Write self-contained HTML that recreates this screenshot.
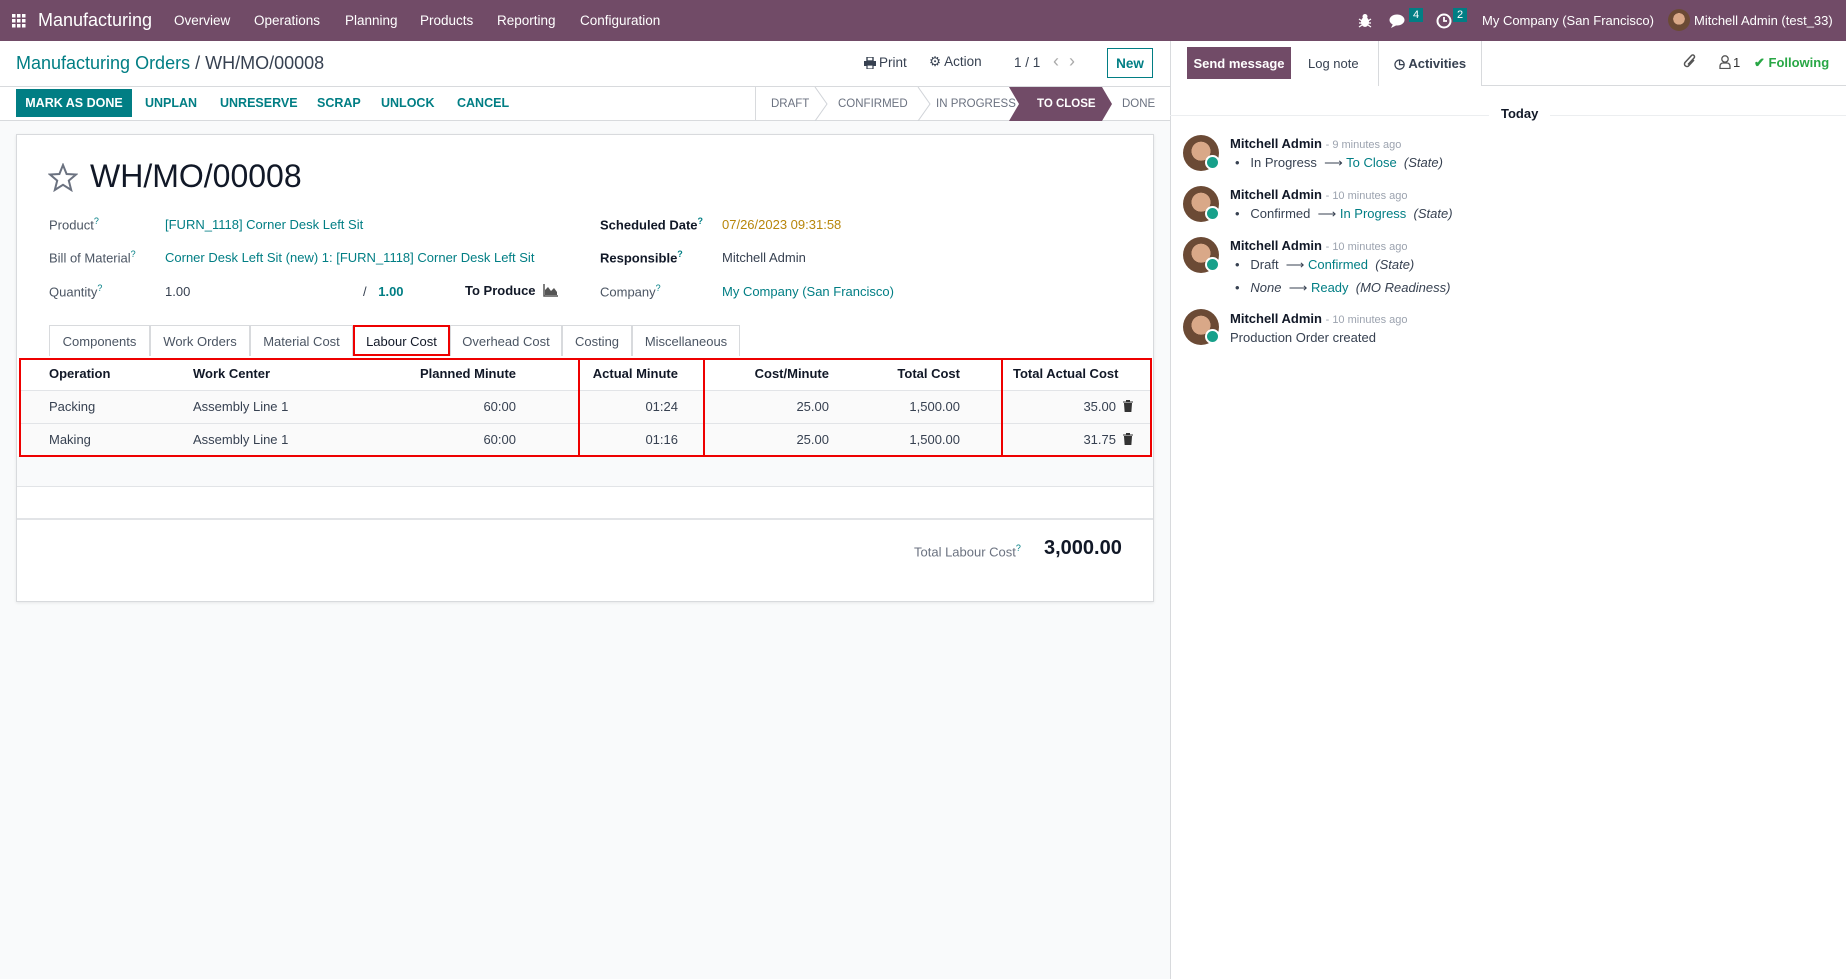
<!DOCTYPE html>
<html><head><meta charset="utf-8"><style>
*{box-sizing:border-box;margin:0;padding:0}
body{width:1846px;height:979px;overflow:hidden;font-family:"Liberation Sans",sans-serif;font-size:13px;color:#374151;background:#f9fafb;position:relative}
.a{position:absolute;white-space:nowrap}
.nav{position:absolute;left:0;top:0;width:1846px;height:41px;background:#714b67;color:#fff}
.nav .a{top:13px;font-size:13.5px}
.teal{color:#017e84}
.b{font-weight:bold}
.lbl{color:#4b5563}
sup{font-size:9px;color:#017e84}
.tab{position:absolute;top:325px;height:31px;border:1px solid #d8dadd;border-bottom:none;background:#fff;color:#4b5563;padding-top:8px;text-align:center;font-size:13px}
.r{text-align:right}
.red{position:absolute;border:2px solid #e00;}
.st{position:absolute;top:98px;font-size:11.5px;color:#6b7280}
</style></head><body>
<div class="nav">
 <svg class="a" style="left:12px;top:14px" width="14" height="14"><g fill="#fff"><rect x="0" y="0" width="3.5" height="3.5"/><rect x="5" y="0" width="3.5" height="3.5"/><rect x="10" y="0" width="3.5" height="3.5"/><rect x="0" y="5" width="3.5" height="3.5"/><rect x="5" y="5" width="3.5" height="3.5"/><rect x="10" y="5" width="3.5" height="3.5"/><rect x="0" y="10" width="3.5" height="3.5"/><rect x="5" y="10" width="3.5" height="3.5"/><rect x="10" y="10" width="3.5" height="3.5"/></g></svg>
 <div class="a" style="left:38px;top:10px;font-size:18px">Manufacturing</div>
 <div class="a" style="left:174px">Overview</div>
 <div class="a" style="left:254px">Operations</div>
 <div class="a" style="left:345px">Planning</div>
 <div class="a" style="left:420px">Products</div>
 <div class="a" style="left:497px">Reporting</div>
 <div class="a" style="left:580px">Configuration</div>
 <svg class="a" style="left:1358px;top:13px" width="14" height="15"><ellipse cx="7" cy="9" rx="4" ry="5" fill="#fff"/><circle cx="7" cy="3.5" r="2.5" fill="#fff"/><path d="M1 6l3 2M13 6l-3 2M1 10h3M13 10h-3M1 14l3-2M13 14l-3-2" stroke="#fff" stroke-width="1.3"/></svg>
 <svg class="a" style="left:1389px;top:13px" width="18" height="16"><ellipse cx="8" cy="7" rx="7.5" ry="5.5" fill="#fff"/><path d="M4 11 L2 15 L8 12Z" fill="#fff"/></svg>
 <div class="a" style="left:1409px;top:8px;background:#017e84;font-size:11px;padding:1px 4px">4</div>
 <svg class="a" style="left:1436px;top:13px" width="16" height="16"><circle cx="8" cy="8" r="6.5" fill="none" stroke="#fff" stroke-width="2"/><path d="M8 4v4h3" stroke="#fff" stroke-width="1.8" fill="none"/></svg>
 <div class="a" style="left:1453px;top:8px;background:#017e84;font-size:11px;padding:1px 4px">2</div>
 <div class="a" style="left:1482px;font-size:13px">My Company (San Francisco)</div>
 <div class="a" style="left:1668px;top:9px;width:22px;height:22px;border-radius:50%;background:radial-gradient(circle at 50% 45%,#d9a888 0 35%,#6b4a35 36%)"></div>
 <div class="a" style="left:1694px;font-size:13px">Mitchell Admin (test_33)</div>
</div>
<!-- control panel -->
<div class="a" style="left:0;top:41px;width:1170px;height:80px;background:#fff;border-bottom:1px solid #d8dadd"></div>
<div class="a" style="left:0;top:86px;width:1170px;height:1px;background:#d8dadd"></div>
<div class="a" style="left:16px;top:53px;font-size:18px"><span class="teal">Manufacturing Orders</span> <span style="color:#374151">/ WH/MO/00008</span></div>
<svg class="a" style="left:864px;top:57px" width="12" height="12"><rect x="3" y="0" width="6" height="4" fill="none" stroke="#374151" stroke-width="1.4"/><rect x="0" y="4" width="12" height="5" fill="#374151"/><rect x="3" y="8" width="6" height="4" fill="#fff" stroke="#374151" stroke-width="1.2"/></svg>
<div class="a" style="left:879px;top:55px;font-size:13.5px">Print</div>
<div class="a" style="left:929px;top:54px;font-size:13.5px">⚙ Action</div>
<div class="a" style="left:1014px;top:55px;font-size:13.5px">1 / 1</div>
<div class="a" style="left:1053px;top:51px;font-size:18px;color:#aaa">‹ &nbsp;›</div>
<div class="a" style="left:1107px;top:48px;width:46px;height:30px;border:1px solid #017e84;color:#017e84;font-weight:bold;text-align:center;padding-top:7px;font-size:13.5px">New</div>
<div class="a" style="left:16px;top:89px;width:116px;height:28px;background:#017e84;color:#fff;font-weight:bold;font-size:12.5px;text-align:center;padding-top:7px">MARK AS DONE</div>
<div class="a teal b" style="left:145px;top:96px;font-size:12.5px">UNPLAN</div>
<div class="a teal b" style="left:220px;top:96px;font-size:12.5px">UNRESERVE</div>
<div class="a teal b" style="left:317px;top:96px;font-size:12.5px">SCRAP</div>
<div class="a teal b" style="left:381px;top:96px;font-size:12.5px">UNLOCK</div>
<div class="a teal b" style="left:457px;top:96px;font-size:12.5px">CANCEL</div>
<div class="a" style="left:755px;top:87px;width:1px;height:34px;background:#d8dadd"></div>
<svg class="a" style="left:755px;top:87px" width="400" height="34"><g fill="none" stroke="#d0d3d8"><path d="M60 0 L72 17 L60 34"/><path d="M163 0 L175 17 L163 34"/></g><path d="M254 0 L347 0 L357 17 L347 34 L254 34 L264 17Z" fill="#714b67"/></svg>
<div class="st" style="left:771px">DRAFT</div>
<div class="st" style="left:838px">CONFIRMED</div>
<div class="st" style="left:936px">IN PROGRESS</div>
<div class="st" style="left:1037px;color:#fff;font-weight:bold">TO CLOSE</div>
<div class="st" style="left:1122px">DONE</div>
<!-- sheet -->
<div class="a" style="left:16px;top:134px;width:1138px;height:468px;background:#fff;border:1px solid #d8dadd;box-shadow:0 1px 3px rgba(0,0,0,.08)"></div>
<svg class="a" style="left:48px;top:163px" width="30" height="29"><path d="M15 2 L18.6 11 L28 11.5 L20.8 17.6 L23.2 27 L15 21.8 L6.8 27 L9.2 17.6 L2 11.5 L11.4 11Z" fill="none" stroke="#6b7280" stroke-width="2"/></svg>
<div class="a" style="left:90px;top:158px;font-size:32px;color:#111827">WH/MO/00008</div>
<div class="a lbl" style="left:49px;top:216px">Product<sup>?</sup></div>
<div class="a teal" style="left:165px;top:217px">[FURN_1118] Corner Desk Left Sit</div>
<div class="a lbl" style="left:49px;top:249px">Bill of Material<sup>?</sup></div>
<div class="a teal" style="left:165px;top:250px">Corner Desk Left Sit (new) 1: [FURN_1118] Corner Desk Left Sit</div>
<div class="a lbl" style="left:49px;top:283px">Quantity<sup>?</sup></div>
<div class="a" style="left:165px;top:284px">1.00</div>
<div class="a" style="left:363px;top:284px">/ <span class="teal b" style="margin-left:8px">1.00</span></div>
<div class="a b" style="left:465px;top:283px;color:#111827">To Produce</div>
<svg class="a" style="left:543px;top:284px" width="15" height="13"><path d="M1 0v12h14" stroke="#555" stroke-width="1.5" fill="none"/><path d="M2 11 L2 6 L5 3 L8 7 L11 4 L14 8 L14 11Z" fill="#555"/></svg>
<div class="a b" style="left:600px;top:216px;color:#111827">Scheduled Date<sup>?</sup></div>
<div class="a" style="left:722px;top:217px;color:#b8860b">07/26/2023 09:31:58</div>
<div class="a b" style="left:600px;top:249px;color:#111827">Responsible<sup>?</sup></div>
<div class="a" style="left:722px;top:250px">Mitchell Admin</div>
<div class="a lbl" style="left:600px;top:283px">Company<sup>?</sup></div>
<div class="a teal" style="left:722px;top:284px">My Company (San Francisco)</div>
<!-- tabs -->
<div class="tab" style="left:49px;width:101px">Components</div>
<div class="tab" style="left:150px;width:100px">Work Orders</div>
<div class="tab" style="left:250px;width:103px">Material Cost</div>
<div class="tab" style="left:353px;width:97px;border:2px solid #e00;color:#111827;padding-top:7px">Labour Cost</div>
<div class="tab" style="left:450px;width:112px">Overhead Cost</div>
<div class="tab" style="left:562px;width:70px">Costing</div>
<div class="tab" style="left:632px;width:108px">Miscellaneous</div>
<!-- table -->
<div class="a" style="left:19px;top:390px;width:1132px;height:66px;background:#fafafa"></div>
<div class="a" style="left:19px;top:390px;width:1132px;height:1px;background:#e2e4e7"></div>
<div class="a" style="left:19px;top:423px;width:1132px;height:1px;background:#e2e4e7"></div>
<div class="a" style="left:17px;top:456px;width:1136px;height:31px;background:#f9fafb;border-bottom:1px solid #e2e4e7"></div>
<div class="a" style="left:17px;top:518px;width:1136px;height:2px;background:#e2e4e7"></div>
<div class="red" style="left:19px;top:358px;width:1133px;height:99px"></div>
<div class="a" style="left:578px;top:358px;width:2px;height:99px;background:#e00"></div>
<div class="a" style="left:703px;top:358px;width:2px;height:99px;background:#e00"></div>
<div class="a" style="left:1001px;top:358px;width:2px;height:99px;background:#e00"></div>
<div class="a b" style="left:49px;top:366px;color:#111827">Operation</div>
<div class="a b" style="left:193px;top:366px;color:#111827">Work Center</div>
<div class="a b r" style="left:400px;width:116px;top:366px;color:#111827">Planned Minute</div>
<div class="a b r" style="left:560px;width:118px;top:366px;color:#111827">Actual Minute</div>
<div class="a b r" style="left:720px;width:109px;top:366px;color:#111827">Cost/Minute</div>
<div class="a b r" style="left:860px;width:100px;top:366px;color:#111827">Total Cost</div>
<div class="a b" style="left:1013px;top:366px;color:#111827">Total Actual Cost</div>
<div class="a" style="left:49px;top:399px">Packing</div>
<div class="a" style="left:193px;top:399px">Assembly Line 1</div>
<div class="a r" style="left:416px;width:100px;top:399px">60:00</div>
<div class="a r" style="left:578px;width:100px;top:399px">01:24</div>
<div class="a r" style="left:729px;width:100px;top:399px">25.00</div>
<div class="a r" style="left:860px;width:100px;top:399px">1,500.00</div>
<div class="a r" style="left:1016px;width:100px;top:399px">35.00</div>
<svg class="a" style="left:1123px;top:400px" width="10" height="12"><path d="M0 2h10M3.5 2V0.5h3V2M1.5 3.5h7l-0.6 8h-5.8Z" fill="#333" stroke="#333" stroke-width="1"/></svg>
<div class="a" style="left:49px;top:432px">Making</div>
<div class="a" style="left:193px;top:432px">Assembly Line 1</div>
<div class="a r" style="left:416px;width:100px;top:432px">60:00</div>
<div class="a r" style="left:578px;width:100px;top:432px">01:16</div>
<div class="a r" style="left:729px;width:100px;top:432px">25.00</div>
<div class="a r" style="left:860px;width:100px;top:432px">1,500.00</div>
<div class="a r" style="left:1016px;width:100px;top:432px">31.75</div>
<svg class="a" style="left:1123px;top:433px" width="10" height="12"><path d="M0 2h10M3.5 2V0.5h3V2M1.5 3.5h7l-0.6 8h-5.8Z" fill="#333" stroke="#333" stroke-width="1"/></svg>
<div class="a" style="left:914px;top:543px;color:#6b7280">Total Labour Cost<sup>?</sup></div>
<div class="a b" style="left:1044px;top:537px;font-size:20px;color:#111827">3,000.00</div>
<!-- chatter -->
<div class="a" style="left:1170px;top:41px;width:676px;height:938px;background:#fff;border-left:1px solid #d8dadd"></div>
<div class="a" style="left:1187px;top:47px;width:104px;height:32px;background:#714b67;color:#fff;font-weight:bold;text-align:center;padding-top:9px;font-size:13px">Send message</div>
<div class="a" style="left:1308px;top:56px;font-size:13px;color:#374151">Log note</div>
<div class="a" style="left:1378px;top:41px;width:104px;height:45px;border-left:1px solid #d8dadd;border-right:1px solid #d8dadd;font-weight:bold;text-align:center;padding-top:15px">◷ Activities</div>
<div class="a" style="left:1482px;top:85px;width:364px;height:1px;background:#d8dadd"></div>
<svg class="a" style="left:1683px;top:53px" width="14" height="17"><path d="M11 7 L5.5 13 A2.5 2.5 0 0 1 2 9.5 L8.5 2.5 A1.7 1.7 0 0 1 11 5 L5 11.5" fill="none" stroke="#555" stroke-width="1.5"/></svg>
<svg class="a" style="left:1719px;top:55px" width="12" height="14"><circle cx="6" cy="4" r="3.2" fill="none" stroke="#555" stroke-width="1.3"/><path d="M1 13.5 V11 A3 3 0 0 1 4 8 H8 A3 3 0 0 1 11 11 V13.5Z" fill="none" stroke="#555" stroke-width="1.3"/></svg>
<div class="a" style="left:1733px;top:55px;color:#333">1</div>
<div class="a b" style="left:1754px;top:55px;color:#28a745">✔ Following</div>
<div class="a" style="left:1170px;top:115px;width:676px;height:1px;background:#eceef0"></div>
<div class="a b" style="left:1489px;top:106px;background:#fff;padding:0 12px;color:#111827">Today</div>
<style>.av{position:absolute;left:1183px;width:36px;height:36px;border-radius:50%;background:radial-gradient(circle at 50% 45%,#d9a888 0 35%,#6b4a35 36%)}.av:after{content:"";position:absolute;right:-1px;bottom:1px;width:11px;height:11px;border-radius:50%;background:#17a08a;border:2px solid #fff}</style>
<div class="av" style="top:135px"></div><div class="av" style="top:186px"></div><div class="av" style="top:237px"></div><div class="av" style="top:309px"></div>
<div class="a" style="left:1230px;top:136px"><b style="color:#111827">Mitchell Admin</b> <span style="color:#9ca3af;font-size:11px">- 9 minutes ago</span></div>
<div class="a" style="left:1235px;top:155px">•&nbsp;&nbsp; In Progress &nbsp;⟶ <span class="teal">To Close</span> &nbsp;<i>(State)</i></div>
<div class="a" style="left:1230px;top:187px"><b style="color:#111827">Mitchell Admin</b> <span style="color:#9ca3af;font-size:11px">- 10 minutes ago</span></div>
<div class="a" style="left:1235px;top:206px">•&nbsp;&nbsp; Confirmed &nbsp;⟶ <span class="teal">In Progress</span> &nbsp;<i>(State)</i></div>
<div class="a" style="left:1230px;top:238px"><b style="color:#111827">Mitchell Admin</b> <span style="color:#9ca3af;font-size:11px">- 10 minutes ago</span></div>
<div class="a" style="left:1235px;top:257px">•&nbsp;&nbsp; Draft &nbsp;⟶ <span class="teal">Confirmed</span> &nbsp;<i>(State)</i></div>
<div class="a" style="left:1235px;top:280px">•&nbsp;&nbsp; <i>None</i> &nbsp;⟶ <span class="teal">Ready</span> &nbsp;<i>(MO Readiness)</i></div>
<div class="a" style="left:1230px;top:311px"><b style="color:#111827">Mitchell Admin</b> <span style="color:#9ca3af;font-size:11px">- 10 minutes ago</span></div>
<div class="a" style="left:1230px;top:330px">Production Order created</div>
</body></html>
